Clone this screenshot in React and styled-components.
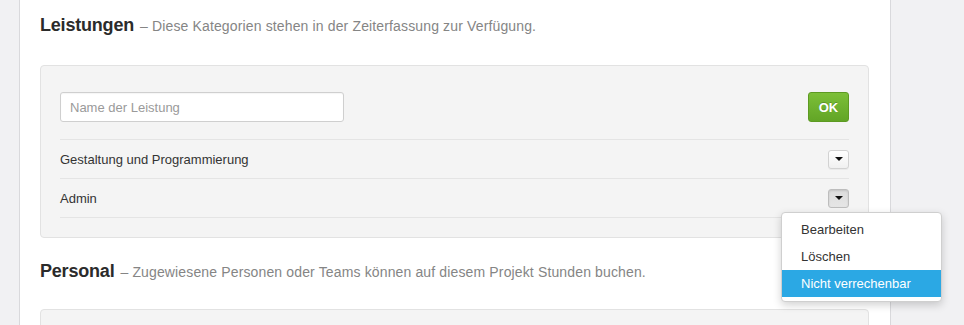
import React from "react";
import styled, { createGlobalStyle } from "styled-components";

const Global = createGlobalStyle`
  html, body { margin: 0; padding: 0; background: #f1f1f3; }
  body { font-family: "Liberation Sans", Arial, sans-serif; color: #333; }
`;

const Shell = styled.div`
  display: flex;
  height: 325px;
  overflow: hidden;
`;

const LeftStrip = styled.div`
  width: 19px;
  flex: none;
  background: #f1f1f3;
  border-right: 1px solid #d9d9dc;
`;

const Main = styled.main`
  width: 830px;
  flex: none;
  background: #fff;
  border-right: 1px solid #d9d9dc;
  padding: 14px 20px 0 20px;
`;

const Heading = styled.h2`
  display: flex;
  align-items: baseline;
  gap: 6px;
  height: 22px;
  margin: ${(p) => (p.$first ? "0" : "22px")} 0 ${(p) => (p.$first ? "29px" : "27px")} 0;
  font-size: 18px;
  line-height: 22px;
  font-weight: bold;
  color: #2b2b2b;
  letter-spacing: -0.2px;
  white-space: nowrap;
`;

const Sub = styled.span`
  font-size: 14px;
  font-weight: normal;
  color: #858585;
  letter-spacing: 0.14px;
`;

const Panel = styled.section`
  width: 789px;
  background: #f4f4f4;
  border: 1px solid #e2e2e2;
  border-radius: 4px;
  padding: 26px 19px 19px 19px;
  min-height: ${(p) => (p.$empty ? "60px" : "auto")};
`;

const FormRow = styled.div`
  display: flex;
  justify-content: space-between;
  align-items: center;
  padding-bottom: 17px;
  border-bottom: 1px solid #e4e4e4;
`;

const Input = styled.input`
  box-sizing: border-box;
  width: 284px;
  height: 30px;
  border: 1px solid #cfcfcf;
  border-radius: 3px;
  background: #fff;
  padding: 0 9px;
  font-family: "Liberation Sans", Arial, sans-serif;
  font-size: 13px;
  color: #333;
  box-shadow: inset 0 1px 1px rgba(0, 0, 0, 0.04);
  &::placeholder { color: #9a9a9a; }
`;

const OkButton = styled.button`
  box-sizing: border-box;
  width: 41px;
  height: 30px;
  border: 1px solid #5d9a22;
  border-radius: 3px;
  background: linear-gradient(#7cbf38, #62a526);
  color: #fff;
  font-family: "Liberation Sans", Arial, sans-serif;
  font-weight: bold;
  font-size: 13px;
  text-shadow: 0 -1px 0 rgba(0, 0, 0, 0.2);
  padding: 0;
`;

const Row = styled.div`
  position: relative;
  display: flex;
  justify-content: space-between;
  align-items: center;
  height: 38px;
  border-bottom: 1px solid #e4e4e4;
  font-size: 13px;
  color: #333;
`;

const CaretWrap = styled.div`
  position: relative;
  display: flex;
`;

const CaretButton = styled.button`
  box-sizing: border-box;
  width: 21px;
  height: 19px;
  padding: 0;
  border: 1px solid ${(p) => (p.$active ? "#bdbdbd" : "#d2d2d2")};
  border-radius: 3px;
  background: ${(p) =>
    p.$active ? "linear-gradient(#dcdcdc, #e6e6e6)" : "linear-gradient(#ffffff, #f0f0f0)"};
  box-shadow: ${(p) =>
    p.$active ? "inset 0 1px 2px rgba(0,0,0,0.12)" : "0 1px 0 rgba(0,0,0,0.04)"};
  display: flex;
  align-items: center;
  justify-content: center;
  &::after {
    content: "";
    display: block;
    width: 0;
    height: 0;
    border-left: 4px solid transparent;
    border-right: 4px solid transparent;
    border-top: 4px solid #111;
  }
`;

const Menu = styled.ul`
  position: absolute;
  top: 23px;
  left: -47px;
  width: 161px;
  box-sizing: border-box;
  margin: 0;
  padding: 3px 0 4px 0;
  list-style: none;
  background: #fff;
  border: 1px solid #cfcfcf;
  border-radius: 4px;
  box-shadow: 0 3px 8px rgba(0, 0, 0, 0.18);
  z-index: 10;
`;

const MenuItem = styled.li`
  height: 27px;
  line-height: 27px;
  padding-left: 19px;
  font-size: 13px;
  color: ${(p) => (p.$active ? "#fff" : "#333")};
  background: ${(p) => (p.$active ? "#2ba8e4" : "transparent")};
`;

export default function App() {
  return (
    <>
      <Global />
      <Shell>
        <LeftStrip />
        <Main>
          <Heading $first>
            Leistungen <Sub>– Diese Kategorien stehen in der Zeiterfassung zur Verfügung.</Sub>
          </Heading>
          <Panel>
            <FormRow>
              <Input placeholder="Name der Leistung" />
              <OkButton>OK</OkButton>
            </FormRow>
            <Row>
              <span>Gestaltung und Programmierung</span>
              <CaretWrap>
                <CaretButton aria-label="Optionen" />
              </CaretWrap>
            </Row>
            <Row>
              <span>Admin</span>
              <CaretWrap>
                <CaretButton $active aria-label="Optionen" />
                <Menu>
                  <MenuItem>Bearbeiten</MenuItem>
                  <MenuItem>Löschen</MenuItem>
                  <MenuItem $active>Nicht verrechenbar</MenuItem>
                </Menu>
              </CaretWrap>
            </Row>
          </Panel>
          <Heading>
            Personal <Sub>– Zugewiesene Personen oder Teams können auf diesem Projekt Stunden buchen.</Sub>
          </Heading>
          <Panel $empty />
        </Main>
      </Shell>
    </>
  );
}
